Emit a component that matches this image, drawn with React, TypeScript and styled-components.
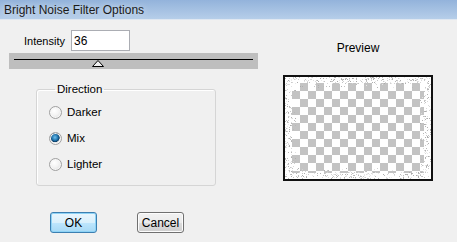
import styled, { createGlobalStyle } from 'styled-components';

const GlobalStyle = createGlobalStyle`
  html, body {
    margin: 0;
    padding: 0;
    background: #f0f0f0;
  }
  body {
    font-family: 'Liberation Sans', Arial, sans-serif;
    font-size: 11px;
    color: #000;
  }
`;

const Window = styled.div`
  width: 457px;
  height: 242px;
  display: flex;
  flex-direction: column;
  background: #f0f0f0;
  overflow: hidden;
`;

const TitleBar = styled.div`
  height: 19px;
  flex: none;
  display: flex;
  align-items: center;
  padding-left: 4px;
  background: linear-gradient(#93b3db, #b6cee9);
  border-bottom: 1px solid #dfe7f1;
  font-size: 12px;
  color: #1a1a1a;
  text-shadow: 0 0 6px rgba(255, 255, 255, 0.7);
`;

const Body = styled.div`
  display: flex;
  flex: 1;
`;

const LeftPane = styled.div`
  width: 265px;
  display: flex;
  flex-direction: column;
  align-items: flex-start;
`;

const IntensityRow = styled.div`
  display: flex;
  align-items: center;
  gap: 6px;
  margin: 10px 0 0 24px;
`;

const Input = styled.input`
  width: 59px;
  height: 21px;
  box-sizing: border-box;
  border: 1px solid #abadb3;
  background: #fff;
  padding: 0 2px;
  font: inherit;
  font-size: 12px;
  outline: none;
`;

const SliderTrack = styled.div`
  width: 249px;
  height: 16px;
  margin: 2px 0 0 9px;
  background: #bebebe;
  display: flex;
  flex-direction: column;
  padding: 0 5px;
  box-sizing: border-box;
`;

const SliderLine = styled.div`
  height: 1px;
  margin-top: 6px;
  background: #000;
  position: relative;
  border-left: 1px solid #000;
  border-right: 1px solid #000;
`;

const Thumb = styled.svg<{ pos: number }>`
  position: absolute;
  top: 1px;
  left: ${({ pos }) => pos}px;
`;

const GroupBox = styled.fieldset`
  width: 180px;
  box-sizing: border-box;
  margin: 14px 0 0 36px;
  padding: 9px 0 13px 12px;
  border: 1px solid #d5d5d5;
  border-radius: 3px;
  box-shadow: inset 1px 1px 0 #fff;
  display: flex;
  flex-direction: column;
  gap: 10px;
`;

const Legend = styled.legend`
  padding: 0 2px;
  margin-left: 6px;
  font-size: 11.5px;
`;

const RadioRow = styled.label`
  display: flex;
  align-items: center;
  gap: 5px;
  height: 16px;
  font-size: 11.5px;
`;

const RadioDot = styled.span<{ checked?: boolean }>`
  width: 11px;
  height: 11px;
  border-radius: 50%;
  border: 1px solid #a0a0a0;
  background: ${({ checked }) =>
    checked
      ? 'radial-gradient(circle at 45% 40%, #6ec1ef 0, #1d6fa8 35%, #0b3b62 50%, #e6e6e6 56%, #fafafa 100%)'
      : 'radial-gradient(circle at 40% 35%, #ffffff 0, #f3f3f3 45%, #d5d5d5 100%)'};
  box-shadow: inset 0 0 0 1px #f6f6f6;
`;

const ButtonRow = styled.div`
  display: flex;
  gap: 40px;
  margin: 26px 0 0 50px;
`;

const Button = styled.button<{ primary?: boolean }>`
  width: 47px;
  height: 21px;
  padding: 0;
  border-radius: 3px;
  font: inherit;
  font-size: 12px;
  color: #000;
  border: 1px solid ${({ primary }) => (primary ? '#3c7fb1' : '#707070')};
  background: ${({ primary }) =>
    primary
      ? 'linear-gradient(#eaf6fd 0%, #d9f0fc 50%, #bee6fd 51%, #a7d9f5 100%)'
      : 'linear-gradient(#f2f2f2 0%, #ebebeb 50%, #dddddd 51%, #cfcfcf 100%)'};
  box-shadow: inset 0 0 0 1px ${({ primary }) => (primary ? '#8ed3f6' : '#fcfcfc')};
`;

const RightPane = styled.div`
  display: flex;
  flex-direction: column;
  align-items: center;
  margin-left: 18px;
  width: 150px;
`;

const PreviewLabel = styled.div`
  margin-top: 21px;
  font-size: 12px;
`;

const PreviewBox = styled.div`
  margin-top: 20px;
  width: 150px;
  height: 106px;
  box-sizing: border-box;
  border: 2px solid #111;
  background: #fff;
  display: flex;
`;

function makeNoise(w: number, h: number) {
  let seed = 12345;
  const rand = () => {
    seed = (seed * 1103515245 + 12345) & 0x7fffffff;
    return seed / 0x7fffffff;
  };
  const dots: { x: number; y: number; c: string }[] = [];
  for (let i = 0; i < 9000; i++) {
    const x = Math.floor(rand() * w);
    const y = Math.floor(rand() * h);
    const edge = Math.min(x, y, w - 1 - x, h - 1 - y);
    if (edge > 10) continue;
    if (edge > 6 && rand() > 0.25) continue;
    if (rand() > 0.45) continue;
    const g = 170 + Math.floor(rand() * 70);
    dots.push({ x, y, c: `rgb(${g},${g},${g})` });
  }
  return dots;
}

const Preview = () => {
  const w = 146;
  const h = 102;
  const dots = makeNoise(w, h);
  return (
    <svg width={w} height={h} viewBox={`0 0 ${w} ${h}`}>
      <defs>
        <pattern id="chk" x="7" y="6" width="16" height="16" patternUnits="userSpaceOnUse">
          <rect width="16" height="16" fill="#fff" />
          <rect x="8" width="8" height="8" fill="#c3c3c3" />
          <rect y="8" width="8" height="8" fill="#c3c3c3" />
        </pattern>
      </defs>
      <rect x="7" y="6" width={w - 14} height={h - 12} fill="url(#chk)" />
      {dots.map((d, i) => (
        <rect key={i} x={d.x} y={d.y} width="1" height="1" fill={d.c} />
      ))}
    </svg>
  );
};

const Radio = ({ label, checked }: { label: string; checked?: boolean }) => (
  <RadioRow>
    <RadioDot checked={checked} />
    {label}
  </RadioRow>
);

export default function App() {
  return (
    <Window>
      <GlobalStyle />
      <TitleBar>Bright Noise Filter Options</TitleBar>
      <Body>
        <LeftPane>
          <IntensityRow>
            Intensity
            <Input defaultValue="36" />
          </IntensityRow>
          <SliderTrack>
            <SliderLine>
              <Thumb pos={77} width="12" height="7" viewBox="0 0 12 7">
                <path d="M6 0.5 L11.5 6.5 L0.5 6.5 Z" fill="#f0f0f0" stroke="#000" strokeWidth="1" />
              </Thumb>
            </SliderLine>
          </SliderTrack>
          <GroupBox>
            <Legend>Direction</Legend>
            <Radio label="Darker" />
            <Radio label="Mix" checked />
            <Radio label="Lighter" />
          </GroupBox>
          <ButtonRow>
            <Button primary>OK</Button>
            <Button>Cancel</Button>
          </ButtonRow>
        </LeftPane>
        <RightPane>
          <PreviewLabel>Preview</PreviewLabel>
          <PreviewBox>
            <Preview />
          </PreviewBox>
        </RightPane>
      </Body>
    </Window>
  );
}
